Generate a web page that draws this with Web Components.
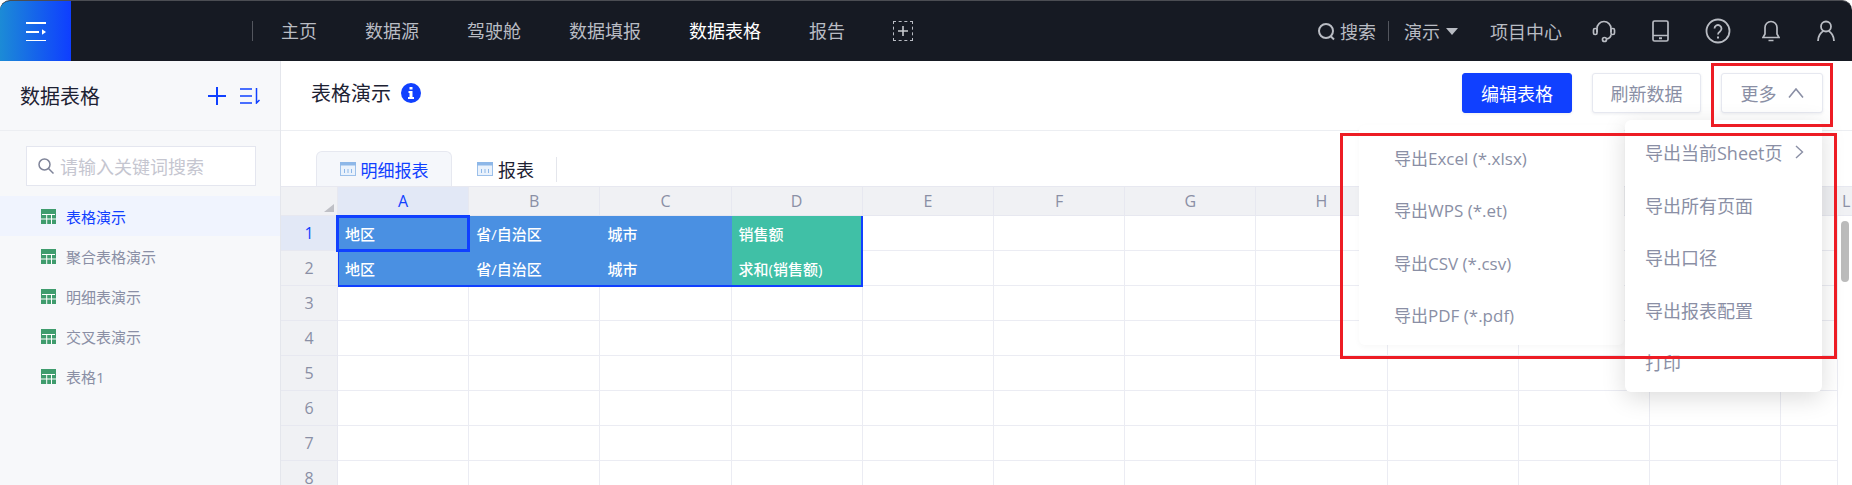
<!DOCTYPE html>
<html lang="zh-CN">
<head>
<meta charset="utf-8">
<title>表格演示</title>
<style>
    html, body {
        margin: 0;
        height: 485px;
        overflow: hidden;
        background: #fff;
        font-family: "Open Sans", "Noto Sans CJK SC", sans-serif;
    }
    main-layout { position: relative; }
</style>
</head>
<body>

<main-layout>
    <app-navbar slot="top"></app-navbar>
    <side-panel slot="side"></side-panel>
    <sheet-header slot="head"></sheet-header>
    <sheet-tabs slot="tabs"></sheet-tabs>
    <data-grid slot="grid"></data-grid>
    <export-menu slot="over"></export-menu>
    <mark-box slot="over" style="left:1711px;top:63px;width:122px;height:64px"></mark-box>
    <mark-box slot="over" style="left:1340px;top:133px;width:497px;height:226px"></mark-box>
</main-layout>

<script>
class MainLayout extends HTMLElement {
    constructor() {
        super();
        this.attachShadow({ mode: 'open' });
        this.shadowRoot.innerHTML = `
            <style>
                :host {
                    display: flex;
                    flex-direction: column;
                    height: 485px;
                    overflow: hidden;
                }
                .body { display: flex; flex: 1; min-height: 0; }
                .content { display: flex; flex-direction: column; flex: 1; min-width: 0; }
            </style>
            <slot name="top"></slot>
            <div class="body">
                <slot name="side"></slot>
                <div class="content">
                    <slot name="head"></slot>
                    <slot name="tabs"></slot>
                    <slot name="grid"></slot>
                </div>
            </div>
            <slot name="over"></slot>
        `;
    }
}

class AppNavbar extends HTMLElement {
    constructor() {
        super();
        this.attachShadow({ mode: 'open' });
        const items = ['主页', '数据源', '驾驶舱', '数据填报', '数据表格', '报告'];
        this.shadowRoot.innerHTML = `
            <style>
                :host {
                    display: flex;
                    align-items: center;
                    box-sizing: border-box;
                    height: 61px;
                    flex: none;
                    background: #161a23;
                    border-top: 1px solid #4b4d53;
                    border-radius: 10px 10px 0 0;
                    overflow: hidden;
                    color: #b9bcc3;
                    font-size: 18px;
                }
                .logo {
                    width: 71px;
                    height: 60px;
                    flex: none;
                    display: flex;
                    align-items: center;
                    justify-content: center;
                    background: linear-gradient(90deg, #1c8bd6, #0f3eff);
                }
                .sep { width: 1px; height: 20px; background: #53565e; flex: none; }
                .sep.first { margin: 0 28px 0 181px; }
                nav { display: flex; align-items: center; gap: 48px; }
                nav span { line-height: 24px; }
                nav .on { color: #fff; }
                .add {
                    box-sizing: border-box;
                    width: 20px;
                    height: 20px;
                    border: 1px dashed #b9bcc3;
                    display: flex;
                    align-items: center;
                    justify-content: center;
                }
                .right { display: flex; align-items: center; margin-left: auto; padding-right: 17px; }
                .search { display: flex; align-items: center; gap: 4px; }
                .right .sep { margin: 0 15px 0 12px; }
                .caret {
                    width: 0; height: 0; margin-left: 6px;
                    border: 6.5px solid transparent;
                    border-top: 7px solid #b9bcc3;
                    border-bottom: 0;
                }
                .proj { margin: 0 30px 0 32px; }
                .right svg { display: block; flex: none; }
            </style>
            <div class="logo">
                <svg width="20" height="20" viewBox="0 0 20 20" fill="#fff">
                    <rect x="0" y="1" width="20" height="2"/>
                    <rect x="0" y="10" width="13" height="2"/>
                    <path d="M16 8.2l4 2.8-4 2.8z"/>
                    <rect x="0" y="19" width="20" height="1.6"/>
                </svg>
            </div>
            <div class="sep first"></div>
            <nav>
                ${items.map(t => `<span class="${t === '数据表格' ? 'on' : ''}">${t}</span>`).join('')}
                <div class="add">
                    <svg width="10" height="10" viewBox="0 0 10 10" stroke="#c9cbd0" stroke-width="1.6"><path d="M0 5h10M5 0v10"/></svg>
                </div>
            </nav>
            <div class="right">
                <div class="search">
                    <svg width="19" height="19" viewBox="0 0 19 19" fill="none" stroke="#b9bcc3" stroke-width="2"><circle cx="9" cy="9" r="7"/><path d="M13.5 14l3.5 3.5"/></svg>
                    <span>搜索</span>
                </div>
                <div class="sep"></div>
                <span>演示</span>
                <div class="caret"></div>
                <span class="proj">项目中心</span>
                <svg width="24" height="24" viewBox="0 0 24 24" fill="none" stroke="#b9bcc3" stroke-width="1.7" style="margin-right:36px">
                    <path d="M5 13V9.5a7 7 0 0 1 14 0V13"/>
                    <rect x="1.5" y="9.5" width="3.5" height="6" rx="1.5"/>
                    <rect x="19" y="9.5" width="3.5" height="6" rx="1.5"/>
                    <path d="M19 15.5c0 2.500-2 4-4.800 4.500"/>
                    <circle cx="12.500" cy="20.500" r="2"/>
                </svg>
                <svg width="17" height="22" viewBox="0 0 17 22" fill="none" stroke="#b9bcc3" stroke-width="1.700" style="margin-right:36px">
                    <rect x="1" y="1" width="15" height="20" rx="1.500"/>
                    <path d="M1 15.500h15"/>
                    <path d="M7 18.300h3" stroke-width="2"/>
                </svg>
                <svg width="26" height="26" viewBox="0 0 26 26" fill="none" stroke="#b9bcc3" stroke-width="1.800" style="margin-right:31px">
                    <circle cx="13" cy="13" r="11.500"/>
                    <path d="M9.500 10.500a3.500 3.500 0 1 1 5.500 2.900c-1.300.9-2 1.500-2 3"/>
                    <path d="M13 18.500v2" stroke-width="2"/>
                </svg>
                <svg width="18" height="24" viewBox="0 0 18 24" fill="none" stroke="#b9bcc3" stroke-width="1.700" style="margin-right:37px">
                    <path d="M9 2.500a6 6 0 0 0-6 6V15l-2 3.500h16L15 15V8.500a6 6 0 0 0-6-6z"/>
                    <path d="M6.500 21.500h5"/>
                </svg>
                <svg width="18" height="22" viewBox="0 0 18 22" fill="none" stroke="#b9bcc3" stroke-width="1.800">
                    <circle cx="9" cy="6.500" r="5"/>
                    <path d="M1 21c0-5 3-9 5.500-10M17 21c0-5-3-9-5.500-10"/>
                </svg>
            </div>
        `;
    }
}

class SidePanel extends HTMLElement {
    constructor() {
        super();
        this.attachShadow({ mode: 'open' });
        const list = ['表格演示', '聚合表格演示', '明细表演示', '交叉表演示', '表格1'];
        this.shadowRoot.innerHTML = `
            <style>
                :host {
                    display: flex;
                    flex-direction: column;
                    box-sizing: border-box;
                    width: 281px;
                    flex: none;
                    background: #f7f8fa;
                    border-right: 1px solid #e4e6ec;
                    color: #8a8fa5;
                }
                .top {
                    display: flex;
                    align-items: center;
                    height: 69px;
                    padding: 0 20px 0 20px;
                    border-bottom: 1px solid #eceef2;
                    font-size: 20px;
                    color: #1d2233;
                }
                .top .plus { margin-left: auto; margin-right: 14px; display: block; }
                .search {
                    box-sizing: border-box;
                    height: 40px;
                    margin: 15px 24px 10px 26px;
                    display: flex;
                    align-items: center;
                    gap: 6px;
                    padding-left: 11px;
                    background: #fff;
                    border: 1px solid #e4e6ef;
                    font-size: 18px;
                    color: #c5c6d0;
                }
                .item {
                    height: 40px;
                    display: flex;
                    align-items: center;
                    gap: 10px;
                    padding-left: 41px;
                    font-size: 15px;
                }
                .item.on { background: #f0f4fe; color: #1040ff; }
            </style>
            <div class="top">
                <span>数据表格</span>
                <svg class="plus" width="18" height="18" viewBox="0 0 18 18" stroke="#1040ff" stroke-width="2"><path d="M0 9h18M9 0v18"/></svg>
                <svg width="20" height="16" viewBox="0 0 20 16" fill="none" stroke="#1040ff" stroke-width="1.500"><path d="M0 1h12M0 8h12M0 15h12M16.500 0v15l3-3"/></svg>
            </div>
            <div class="search">
                <svg width="16" height="16" viewBox="0 0 16 16" fill="none" stroke="#7f8499" stroke-width="1.500"><circle cx="6.500" cy="6.500" r="5.500"/><path d="M10.500 10.500l5 5"/></svg>
                <span>请输入关键词搜索</span>
            </div>
            ${list.map((t, i) => `
                <div class="item ${i === 0 ? 'on' : ''}">
                    <svg width="15" height="15" viewBox="0 0 15 15">
                        <rect width="15" height="15" fill="#3f9c6d"/>
                        <path d="M5.200 5h1v10h-1zM10 5h1v10h-1zM1 5h13v1H1z" fill="#fff"/>
                        <path d="M0 9.500h15v1H0z" fill="#fff"/>
                    </svg>
                    <span>${t}</span>
                </div>`).join('')}
        `;
    }
}

class SheetHeader extends HTMLElement {
    constructor() {
        super();
        this.attachShadow({ mode: 'open' });
        this.shadowRoot.innerHTML = `
            <style>
                :host {
                    display: flex;
                    align-items: center;
                    box-sizing: border-box;
                    height: 70px;
                    flex: none;
                    padding: 0 29px 6px 30px;
                    border-bottom: 1px solid #eceef2;
                    font-size: 18px;
                }
                h1 { margin: 0; font: inherit; font-size: 20px; color: #1d2233; }
                .info { margin-left: 10px; display: block; }
                button {
                    box-sizing: border-box;
                    height: 40px;
                    border: 1px solid #e6e8f0;
                    border-radius: 3px;
                    background: #fff;
                    color: #8a8fa5;
                    font: inherit;
                    padding: 0;
                    box-shadow: 0 1px 3px rgba(30, 40, 80, .08);
                }
                .edit { width: 110px; margin-left: auto; background: #1040ff; border-color: #1040ff; color: #fff; }
                .refresh { width: 109px; margin-left: 20px; }
                .more { width: 102px; margin-left: 20px; display: flex; align-items: center; justify-content: center; gap: 11px; }
            </style>
            <h1>表格演示</h1>
            <svg class="info" width="20" height="20" viewBox="0 0 20 20">
                <circle cx="10" cy="10" r="10" fill="#1040ff"/>
                <path d="M8.500 4h3v2.500h-3zM7.500 8h4v6h1.500v2H7v-2h1.500v-4h-1z" fill="#fff"/>
            </svg>
            <button class="edit">编辑表格</button>
            <button class="refresh">刷新数据</button>
            <button class="more">更多
                <svg width="16" height="10" viewBox="0 0 16 10" fill="none" stroke="#8a8fa5" stroke-width="1.600"><path d="M1 9.500l7-8.500 7 8.500"/></svg>
            </button>
        `;
    }
}

class SheetTabs extends HTMLElement {
    constructor() {
        super();
        this.attachShadow({ mode: 'open' });
        const icon = `
            <svg width="16" height="14" viewBox="0 0 16 14">
                <rect x=".5" y=".5" width="15" height="13" fill="#eaf2fc" stroke="#9cc0ea"/>
                <rect x="0" y="0" width="16" height="3.500" fill="#8db7e8"/>
                <path d="M4 7h1v4H4zM7.500 7h1v4h-1zM11 7h1v4h-1z" fill="#8db7e8"/>
            </svg>`;
        this.shadowRoot.innerHTML = `
            <style>
                :host {
                    display: flex;
                    align-items: flex-end;
                    box-sizing: border-box;
                    height: 55px;
                    flex: none;
                    padding-left: 35px;
                    font-size: 17px;
                    color: #1d2233;
                }
                .tab {
                    box-sizing: border-box;
                    height: 35px;
                    display: flex;
                    align-items: center;
                    justify-content: center;
                    gap: 5px;
                }
                .on {
                    width: 136px;
                    background: #f5f7fb;
                    border: 1px solid #e6e8f0;
                    border-bottom: 0;
                    border-radius: 6px 6px 0 0;
                    color: #1040ff;
                }
                .plain { margin-left: 25px; font-size: 18px; gap: 5px; }
                .sep { width: 1px; height: 25px; background: #e4e6ec; margin: 0 0 4px 22px; }
            </style>
            <div class="tab on">${icon}<span>明细报表</span></div>
            <div class="tab plain">${icon}<span>报表</span></div>
            <div class="sep"></div>
        `;
    }
}

class DataGrid extends HTMLElement {
    constructor() {
        super();
        this.attachShadow({ mode: 'open' });
        const cols = 'ABCDEFGHIJKL'.split('');
        const data = {
            1: ['地区', '省/自治区', '城市', '销售额'],
            2: ['地区', '省/自治区', '城市', '求和(销售额)']
        };
        let html = `<div class="hd corner"><i></i></div>`;
        cols.forEach((c, i) => {
            html += `<div class="hd col ${i === 0 ? 'act' : ''}">${c}</div>`;
        });
        for (let r = 1; r <= 9; r++) {
            html += `<div class="hd row ${r === 1 ? 'act' : ''}">${r}</div>`;
            cols.forEach((c, i) => {
                const text = data[r] ? data[r][i] : null;
                if (text) {
                    html += `<div class="cell ${i === 3 ? 'green' : 'blue'}">${text}</div>`;
                } else {
                    html += `<div class="cell"></div>`;
                }
            });
        }
        this.shadowRoot.innerHTML = `
            <style>
                :host {
                    display: block;
                    position: relative;
                    flex: 1;
                    min-height: 0;
                    overflow: hidden;
                    background: #fff;
                }
                .sheet {
                    display: grid;
                    grid-template-columns: 57px repeat(12, 131.2px);
                    grid-template-rows: 30px repeat(9, 35px);
                    width: max-content;
                    font-size: 16px;
                    color: #8a8fa5;
                }
                .hd {
                    box-sizing: border-box;
                    display: flex;
                    align-items: center;
                    justify-content: center;
                    background: #f0f1f4;
                    border-right: 1px solid #e7e8f0;
                    border-bottom: 1px solid #e7e8f0;
                }
                .col { border-top: 1px solid #e7e8f0; }
                .corner { position: relative; border-top: 1px solid #e7e8f0; }
                .corner i {
                    position: absolute;
                    right: 3px;
                    bottom: 3px;
                    width: 0; height: 0;
                    border-left: 10px solid transparent;
                    border-bottom: 8px solid #bfc0c6;
                }
                .act { background: #e2e8f6; color: #1040ff; }
                .cell {
                    box-sizing: border-box;
                    display: flex;
                    align-items: center;
                    padding-left: 7px;
                    border-right: 1px solid #ebecf3;
                    border-bottom: 1px solid #ebecf3;
                    font-size: 15px;
                    font-weight: 500;
                    color: #fff;
                }
                .blue { background: #4a90e2; border: 0; }
                .green { background: #40c0a6; border: 0; }
                .range {
                    position: absolute;
                    left: 57px; top: 30px;
                    width: 525px; height: 71px;
                    box-sizing: border-box;
                    border: 1px solid #1040ff;
                    border-width: 0 2px 2px 1px;
                }
                .active {
                    position: absolute;
                    left: 55px; top: 29px;
                    width: 134px; height: 37px;
                    box-sizing: border-box;
                    border: 3px solid #1040ff;
                }
                .track {
                    position: absolute;
                    top: 30px; right: 0; bottom: 0;
                    width: 14px;
                    background: #fff;
                    border-left: 1px solid #ebecf3;
                }
                .track i {
                    display: block;
                    width: 8px; height: 61px;
                    margin: 5px 0 0 3px;
                    border-radius: 4px;
                    background: #bbb;
                }
            </style>
            <div class="sheet">${html}</div>
            <div class="range"></div>
            <div class="active"></div>
            <div class="track"><i></i></div>
        `;
    }
}

class ExportMenu extends HTMLElement {
    constructor() {
        super();
        this.attachShadow({ mode: 'open' });
        const sub = ['导出Excel (*.xlsx)', '导出WPS (*.et)', '导出CSV (*.csv)', '导出PDF (*.pdf)'];
        const main = ['导出所有页面', '导出口径', '导出报表配置', '打印'];
        this.shadowRoot.innerHTML = `
            <style>
                :host {
                    position: absolute;
                    left: 1359px;
                    top: 120px;
                    display: flex;
                    align-items: flex-start;
                    gap: 1px;
                    color: #8a8fa5;
                    font-size: 18px;
                }
                .sub, .main {
                    box-sizing: border-box;
                    background: #fff;
                    border-radius: 6px;
                }
                .sub {
                    width: 265px;
                    height: 220px;
                    margin-top: 5px;
                    padding: 6px 0 0 35px;
                    font-size: 17px;
                    box-shadow: 0 2px 6px rgba(0, 0, 0, .03);
                }
                .main {
                    width: 197px;
                    height: 272px;
                    padding: 6px 18px 0 20px;
                    box-shadow: 0 6px 24px rgba(0, 0, 0, .14);
                }
                .row { height: 52.500px; display: flex; align-items: center; justify-content: space-between; }
            </style>
            <div class="sub">${sub.map(t => `<div class="row">${t}</div>`).join('')}</div>
            <div class="main">
                <div class="row"><span>导出当前Sheet页</span>
                    <svg width="9" height="14" viewBox="0 0 9 14" fill="none" stroke="#8a8fa5" stroke-width="1.400"><path d="M1 1l6.500 6L1 13"/></svg>
                </div>
                ${main.map(t => `<div class="row">${t}</div>`).join('')}
            </div>
        `;
    }
}

class MarkBox extends HTMLElement {
    constructor() {
        super();
        this.attachShadow({ mode: 'open' });
        this.shadowRoot.innerHTML = `
            <style>
                :host {
                    position: absolute;
                    box-sizing: border-box;
                    border: 3px solid #ed1c24;
                    pointer-events: none;
                }
            </style>
        `;
    }
}

customElements.define('main-layout', MainLayout);
customElements.define('app-navbar', AppNavbar);
customElements.define('side-panel', SidePanel);
customElements.define('sheet-header', SheetHeader);
customElements.define('sheet-tabs', SheetTabs);
customElements.define('data-grid', DataGrid);
customElements.define('export-menu', ExportMenu);
customElements.define('mark-box', MarkBox);
</script>
</body>
</html>
